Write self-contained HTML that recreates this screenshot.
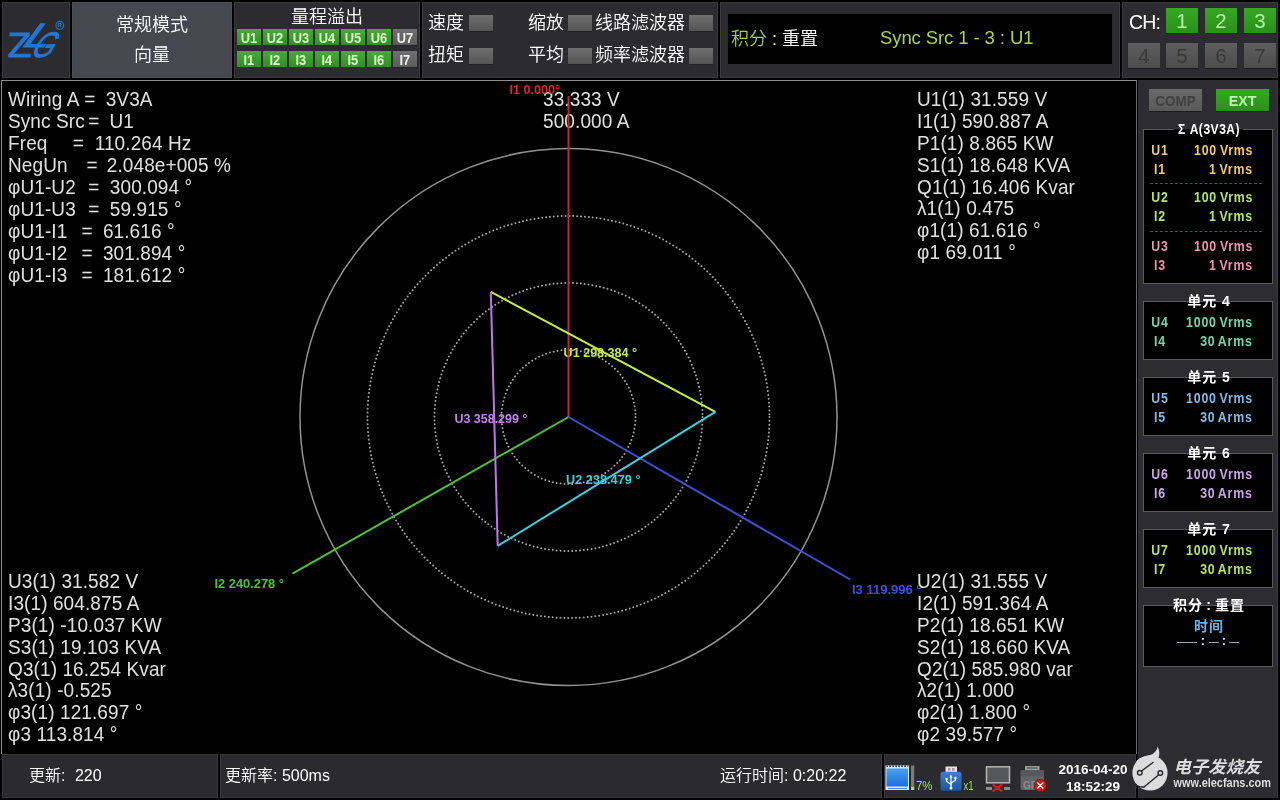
<!DOCTYPE html>
<html lang="zh">
<head>
<meta charset="utf-8">
<title>ZLG Power Analyzer - Vector</title>
<style>
html,body{margin:0;padding:0;background:#000;}
body{width:1280px;height:800px;position:relative;overflow:hidden;font-family:"Liberation Sans","Noto Sans CJK SC",sans-serif;color:#fff;}
#wrap{position:absolute;left:0;top:0;width:1280px;height:800px;will-change:transform;}
.abs{position:absolute;}
.box{position:absolute;background:#2c2c30;box-sizing:border-box;border:1px solid #3b3b40;}
.ui{font-family:"Liberation Sans","Noto Sans CJK SC",sans-serif;font-weight:350;font-size:18px;line-height:20px;color:#fff;white-space:nowrap;position:absolute;}
.ind{position:absolute;width:24px;height:16px;background:linear-gradient(#6e6e6e,#555);box-shadow:0 1px 0 #222;}
.gb{position:absolute;width:24px;height:16px;background:linear-gradient(#4aa93a,#2f9123);color:#dcffc8;font-size:14px;line-height:18.5px;text-align:center;font-weight:bold;box-shadow:0 1px 0 #1a3a14;}
.gb span{display:inline-block;transform:scaleX(.92);}
.gb.off{background:linear-gradient(#707070,#5c5c5c);color:#eee;box-shadow:0 1px 0 #222;}
.ch{position:absolute;width:32px;height:25px;text-align:center;font-size:20.5px;line-height:25px;box-shadow:0 1px 0 #1c1c1c;}
.ch.on{background:linear-gradient(#37a724,#2b9019);color:#b4f5a4;}
.ch.off{background:linear-gradient(#5e5e5e,#4c4c4c);color:#393939;}
#main{position:absolute;left:1px;top:80px;width:1136px;height:674px;box-sizing:border-box;border:1px solid #8e8e8e;border-right-color:#6c6c6e;border-bottom:none;background:#000;}
.col{position:absolute;font-size:19px;line-height:21.05px;letter-spacing:.1px;margin-top:.3px;transform:scaleY(1.045);transform-origin:0 0;color:#e0e0e0;white-space:pre;}
#side{position:absolute;left:1138px;top:80px;width:140px;height:718px;background:#2c2c31;box-sizing:border-box;border-right:1px solid #3a3a40;}
.grp{position:absolute;left:1143px;width:130px;box-sizing:border-box;border:1px solid #5a5a5e;background:#000;}
.gt{position:absolute;left:1138px;width:142px;text-align:center;font-size:14px;line-height:14px;font-weight:bold;color:#fff;white-space:nowrap;letter-spacing:1px;}
.gt span{background:transparent;padding:0 3px;display:inline-block;}
.row{position:absolute;left:1138px;width:142px;height:14px;margin-top:-1px;font-size:14px;line-height:14px;font-weight:bold;white-space:nowrap;}
.row .l{position:absolute;left:2px;width:40px;text-align:center;transform:scaleX(.88);letter-spacing:.9px;word-spacing:-1.5px;}
.row .r{position:absolute;right:28px;text-align:right;transform:scaleX(.88);transform-origin:100% 50%;letter-spacing:.9px;word-spacing:-1.5px;margin-right:-1px;}
.dash{position:absolute;left:1150px;width:112px;height:0;border-top:1px dashed #46536e;}
.bb{position:absolute;top:754px;height:44px;background:#2b2b2f;box-sizing:border-box;border:1px solid #38383c;}
.bt{position:absolute;font-weight:350;font-size:16px;line-height:20px;color:#fff;white-space:nowrap;}
</style>
</head>
<body>
<div id="wrap">

<!-- ===== TOP BAR ===== -->
<div class="box" style="left:2px;top:2px;width:68px;height:76px;"></div>
<div class="box" style="left:72px;top:2px;width:160px;height:76px;background:#46474f;border-color:#4c4d55;"></div>
<div class="box" style="left:234px;top:2px;width:186px;height:76px;"></div>
<div class="box" style="left:422px;top:2px;width:296px;height:76px;"></div>
<div class="box" style="left:720px;top:2px;width:400px;height:76px;"></div>
<div class="box" style="left:1122px;top:2px;width:156px;height:76px;"></div>


<!-- logo -->
<svg class="abs" style="left:0;top:0;" width="72" height="80" viewBox="0 0 72 80">
  <g fill="#2277d4" stroke="#2277d4" stroke-width=".9" font-family="Liberation Sans, sans-serif">
    <text transform="translate(7.6,56.9) scale(1.13,1)" font-size="34.5">Z</text>
    <text transform="translate(19.5,47) skewX(-36.5) scale(1.35,1)" font-size="34">L</text>
    <text transform="translate(28.5,57) skewX(-30) scale(.78,1)" font-size="35.5">G</text>
  </g>
  <circle cx="59.8" cy="25.3" r="3.9" fill="none" stroke="#2277d4" stroke-width="1.1"/>
  <text x="59.8" y="27.4" font-size="5.6" text-anchor="middle" fill="#2a80dc" font-family="Liberation Sans, sans-serif" font-weight="bold">R</text>
</svg>

<!-- mode -->
<div class="ui" style="left:72px;width:160px;top:15px;text-align:center;">常规模式</div>
<div class="ui" style="left:72px;width:160px;top:45px;text-align:center;">向量</div>

<!-- range overflow -->
<div class="ui" style="left:234px;width:186px;top:7px;text-align:center;">量程溢出</div>
<div class="gb" style="left:237px;top:29px;"><span>U1</span></div>
<div class="gb" style="left:263px;top:29px;"><span>U2</span></div>
<div class="gb" style="left:289px;top:29px;"><span>U3</span></div>
<div class="gb" style="left:315px;top:29px;"><span>U4</span></div>
<div class="gb" style="left:341px;top:29px;"><span>U5</span></div>
<div class="gb" style="left:367px;top:29px;"><span>U6</span></div>
<div class="gb off" style="left:393px;top:29px;"><span>U7</span></div>
<div class="gb" style="left:237px;top:51px;"><span>I1</span></div>
<div class="gb" style="left:263px;top:51px;"><span>I2</span></div>
<div class="gb" style="left:289px;top:51px;"><span>I3</span></div>
<div class="gb" style="left:315px;top:51px;"><span>I4</span></div>
<div class="gb" style="left:341px;top:51px;"><span>I5</span></div>
<div class="gb" style="left:367px;top:51px;"><span>I6</span></div>
<div class="gb off" style="left:393px;top:51px;"><span>I7</span></div>

<!-- toggles -->
<div class="ui" style="left:428px;top:13px;">速度</div><div class="ind" style="left:469px;top:15px;"></div>
<div class="ui" style="left:428px;top:45px;">扭矩</div><div class="ind" style="left:469px;top:48px;"></div>
<div class="ui" style="left:528px;top:13px;">缩放</div><div class="ind" style="left:568px;top:15px;"></div>
<div class="ui" style="left:528px;top:45px;">平均</div><div class="ind" style="left:568px;top:48px;"></div>
<div class="ui" style="left:595px;top:13px;">线路滤波器</div><div class="ind" style="left:689px;top:15px;"></div>
<div class="ui" style="left:595px;top:45px;">频率滤波器</div><div class="ind" style="left:689px;top:48px;"></div>

<!-- integ display -->
<div class="abs" style="left:728px;top:14px;width:384px;height:50px;background:#000;"></div>
<div class="ui" style="left:731px;top:29px;"><span style="color:#a2d04a">积分</span> : 重置</div>
<div class="ui" style="left:880px;top:28px;color:#a8d84a;font-size:18.5px;letter-spacing:-.1px;">Sync Src 1 - 3 : U1</div>

<!-- CH -->
<div class="ui" style="left:1129px;top:12px;font-size:19.5px;letter-spacing:-.8px;">CH:</div>
<div class="ch on" style="left:1166px;top:8px;">1</div>
<div class="ch on" style="left:1205px;top:8px;">2</div>
<div class="ch on" style="left:1244px;top:8px;">3</div>
<div class="ch off" style="left:1128px;top:43px;">4</div>
<div class="ch off" style="left:1166px;top:43px;">5</div>
<div class="ch off" style="left:1205px;top:43px;">6</div>
<div class="ch off" style="left:1244px;top:43px;">7</div>

<!-- ===== MAIN ===== -->
<div id="main"></div>


<div class="col" style="left:543px;top:88px;">33.333 V
500.000 A</div>
<svg class="abs" style="left:0;top:0;" width="1280" height="800" viewBox="0 0 1280 800">
  <g font-family="Liberation Sans, sans-serif" font-weight="bold" font-size="13">
    <text x="509.5" y="93.7" fill="#d42a2a" textLength="50.5" lengthAdjust="spacingAndGlyphs">I1 0.000°</text>
    <text x="563.6" y="357" fill="#c6ee44" textLength="73.5" lengthAdjust="spacingAndGlyphs">U1 298.384 °</text>
    <text x="454.4" y="423" fill="#c880f0" textLength="73" lengthAdjust="spacingAndGlyphs">U3 358.299 °</text>
    <text x="566" y="484" fill="#34d2e2" textLength="74.5" lengthAdjust="spacingAndGlyphs">U2 238.479 °</text>
    <text x="214.5" y="588" fill="#4ec234" textLength="69.5" lengthAdjust="spacingAndGlyphs">I2 240.278 °</text>
    <text x="852" y="594" fill="#3a52d6" textLength="69.5" lengthAdjust="spacingAndGlyphs">I3 119.996 °</text>
  </g>
  <g fill="none">
    <circle cx="568.5" cy="417" r="268.5" stroke="#929292" stroke-width="1.5"/>
    <circle cx="568.5" cy="417" r="201" stroke="#a6a6a6" stroke-width="2" stroke-linecap="round" stroke-dasharray="0 3.9"/>
    <circle cx="568.5" cy="417" r="134" stroke="#a6a6a6" stroke-width="2" stroke-linecap="round" stroke-dasharray="0 3.9"/>
    <circle cx="568.5" cy="417" r="67" stroke="#a6a6a6" stroke-width="2" stroke-linecap="round" stroke-dasharray="0 3.9"/>
    <line x1="568.5" y1="417" x2="568.5" y2="96" stroke="#c3282a" stroke-width="2"/>
    <line x1="568.5" y1="417" x2="292.5" y2="573.7" stroke="#4ec234" stroke-width="2"/>
    <line x1="568.5" y1="417" x2="850.2" y2="579.5" stroke="#3a52d6" stroke-width="2"/>
    <line x1="490.8" y1="291.9" x2="715.4" y2="411.9" stroke="#c6ee44" stroke-width="2"/>
    <line x1="715.4" y1="411.9" x2="497.7" y2="545.9" stroke="#34d2e2" stroke-width="2"/>
    <line x1="497.7" y1="545.9" x2="490.8" y2="291.9" stroke="#c273f2" stroke-width="2"/>
  </g>
</svg>

<div id="lc">
<div class="col" style="left:8px;top:88px;">Wiring A</div><div class="col" style="left:84.2px;top:88px;">=</div><div class="col" style="left:105.7px;top:88px;">3V3A</div>
<div class="col" style="left:8px;top:110px;">Sync Src</div><div class="col" style="left:88.3px;top:110px;">=</div><div class="col" style="left:109.5px;top:110px;">U1</div>
<div class="col" style="left:8px;top:132px;">Freq</div><div class="col" style="left:72.7px;top:132px;">=</div><div class="col" style="left:94.7px;top:132px;">110.264 Hz</div>
<div class="col" style="left:8px;top:154px;">NegUn</div><div class="col" style="left:86.4px;top:154px;">=</div><div class="col" style="left:106.8px;top:154px;">2.048e+005 %</div>
<div class="col" style="left:8px;top:176px;">φU1-U2</div><div class="col" style="left:88.3px;top:176px;">=</div><div class="col" style="left:109.8px;top:176px;">300.094 °</div>
<div class="col" style="left:8px;top:198px;">φU1-U3</div><div class="col" style="left:88.3px;top:198px;">=</div><div class="col" style="left:109.8px;top:198px;">59.915 °</div>
<div class="col" style="left:8px;top:220px;">φU1-I1</div><div class="col" style="left:81.5px;top:220px;">=</div><div class="col" style="left:102.9px;top:220px;">61.616 °</div>
<div class="col" style="left:8px;top:242px;">φU1-I2</div><div class="col" style="left:81.5px;top:242px;">=</div><div class="col" style="left:102.9px;top:242px;">301.894 °</div>
<div class="col" style="left:8px;top:264px;">φU1-I3</div><div class="col" style="left:81.5px;top:264px;">=</div><div class="col" style="left:102.9px;top:264px;">181.612 °</div>
</div>


<div class="col" style="left:917px;top:88px;">U1(1) 31.559 V
I1(1) 590.887 A
P1(1) 8.865 KW
S1(1) 18.648 KVA
Q1(1) 16.406 Kvar
λ1(1) 0.475
φ1(1) 61.616 °
φ1 69.011 °</div>

<div class="col" style="left:8px;top:570px;">U3(1) 31.582 V
I3(1) 604.875 A
P3(1) -10.037 KW
S3(1) 19.103 KVA
Q3(1) 16.254 Kvar
λ3(1) -0.525
φ3(1) 121.697 °
φ3 113.814 °</div>

<div class="col" style="left:917px;top:570px;">U2(1) 31.555 V
I2(1) 591.364 A
P2(1) 18.651 KW
S2(1) 18.660 KVA
Q2(1) 585.980 var
λ2(1) 1.000
φ2(1) 1.800 °
φ2 39.577 °</div>

<!-- ===== SIDE ===== -->
<div id="side"></div>


<div class="abs" style="left:1149px;top:89px;width:53px;height:22px;background:linear-gradient(#6a6a6a,#595959);box-shadow:0 1px 0 #1c1c1c;"></div>
<div class="abs" style="left:1149px;top:89px;width:53px;height:22px;line-height:23px;text-align:center;font-size:15px;font-weight:bold;color:#404040;"><span style="display:inline-block;transform:scaleX(.9)">COMP</span></div>
<div class="abs" style="left:1216px;top:89px;width:53px;height:22px;background:linear-gradient(#37a724,#2b9019);box-shadow:0 1px 0 #1c1c1c;"></div>
<div class="abs" style="left:1216px;top:89px;width:53px;height:22px;line-height:23px;text-align:center;font-size:15px;font-weight:bold;color:#b8f8a8;"><span style="display:inline-block;transform:scaleX(.95)">EXT</span></div>

<div class="grp" style="top:129px;height:155px;"></div>
<div class="abs" style="left:1174px;top:129px;width:69px;height:1px;background:#0c0c0e;"></div>
<div class="abs" style="left:1182px;top:300.5px;width:50px;height:1px;background:#0c0c0e;"></div>
<div class="abs" style="left:1182px;top:376.5px;width:50px;height:1px;background:#0c0c0e;"></div>
<div class="abs" style="left:1182px;top:452.5px;width:50px;height:1px;background:#0c0c0e;"></div>
<div class="abs" style="left:1182px;top:528.5px;width:50px;height:1px;background:#0c0c0e;"></div>
<div class="abs" style="left:1167px;top:604.5px;width:83px;height:1px;background:#0c0c0e;"></div>
<div class="gt" style="top:122px;"><span style="transform:scaleX(.86);letter-spacing:.6px;">Σ A(3V3A)</span></div>
<div class="row" style="top:143.5px;color:#f2cc5c;"><span class="l">U1</span><span class="r">100 Vrms</span></div>
<div class="row" style="top:162.5px;color:#f2cc5c;"><span class="l">I1</span><span class="r">1 Vrms</span></div>
<div class="dash" style="top:183px;"></div>
<div class="row" style="top:191px;color:#b4e468;"><span class="l">U2</span><span class="r">100 Vrms</span></div>
<div class="row" style="top:210px;color:#b4e468;"><span class="l">I2</span><span class="r">1 Vrms</span></div>
<div class="dash" style="top:231px;"></div>
<div class="row" style="top:239.5px;color:#f090b4;"><span class="l">U3</span><span class="r">100 Vrms</span></div>
<div class="row" style="top:258.5px;color:#f090b4;"><span class="l">I3</span><span class="r">1 Vrms</span></div>
<div class="grp" style="top:300.5px;height:59px;"></div>
<div class="gt" style="top:293.5px;"><span>单元 4</span></div>
<div class="row" style="top:315.5px;color:#70d8b0;"><span class="l">U4</span><span class="r">1000 Vrms</span></div>
<div class="row" style="top:334.5px;color:#70d8b0;"><span class="l">I4</span><span class="r">30 Arms</span></div>
<div class="grp" style="top:376.5px;height:59px;"></div>
<div class="gt" style="top:369.5px;"><span>单元 5</span></div>
<div class="row" style="top:391.5px;color:#80bce8;"><span class="l">U5</span><span class="r">1000 Vrms</span></div>
<div class="row" style="top:410.5px;color:#80bce8;"><span class="l">I5</span><span class="r">30 Arms</span></div>
<div class="grp" style="top:452.5px;height:59px;"></div>
<div class="gt" style="top:445.5px;"><span>单元 6</span></div>
<div class="row" style="top:467.5px;color:#cca4e8;"><span class="l">U6</span><span class="r">1000 Vrms</span></div>
<div class="row" style="top:486.5px;color:#cca4e8;"><span class="l">I6</span><span class="r">30 Arms</span></div>
<div class="grp" style="top:528.5px;height:59px;"></div>
<div class="gt" style="top:521.5px;"><span>单元 7</span></div>
<div class="row" style="top:543.5px;color:#b4e458;"><span class="l">U7</span><span class="r">1000 Vrms</span></div>
<div class="row" style="top:562.5px;color:#b4e458;"><span class="l">I7</span><span class="r">30 Arms</span></div>

<div class="grp" style="top:604.5px;height:62px;"></div>
<div class="gt" style="top:597.5px;word-spacing:-1.8px;"><span>积分 : 重置</span></div>
<div class="gt" style="top:619px;color:#68b4e8;"><span>时间</span></div>
<div class="abs" style="left:1177px;top:634px;height:14px;line-height:14px;font-size:10px;color:#b4d4ee;white-space:nowrap;"><span>——</span><span style="display:inline-block;width:12px;text-align:center;font-size:13px;font-weight:bold;color:#d8e8f4;">:</span><span>—</span><span style="display:inline-block;width:10px;text-align:center;font-size:13px;font-weight:bold;color:#d8e8f4;">:</span><span>—</span></div>

<!-- ===== BOTTOM ===== -->
<div class="bb" style="left:2px;width:216px;"></div>
<div class="bb" style="left:220px;width:662px;"></div>
<div class="bb" style="left:884px;width:252px;"></div>


<div class="bt" style="left:29px;top:766px;">更新:<span style="margin-left:5px"> 220</span></div>
<div class="bt" style="left:225px;top:766px;">更新率: 500ms</div>
<div class="bt" style="left:720px;top:766px;">运行时间: 0:20:22</div>
<div class="abs" style="left:1050px;top:761px;width:86px;text-align:center;font-size:13.5px;line-height:17px;font-weight:bold;color:#fff;">2016-04-20<br>18:52:29</div>


<!-- status icons -->
<svg class="abs" style="left:880px;top:755px;" width="260" height="45" viewBox="880 755 260 45">
  <defs>
    <linearGradient id="gb" x1="0" y1="0" x2="0" y2="1"><stop offset="0" stop-color="#4aa0f4"/><stop offset="1" stop-color="#1c6fd8"/></linearGradient>
    <linearGradient id="gu" x1="0" y1="0" x2="0" y2="1"><stop offset="0" stop-color="#3d7fd0"/><stop offset="1" stop-color="#1d559c"/></linearGradient>
  </defs>
  <!-- memory -->
  <rect x="885.5" y="765.5" width="23.5" height="24.5" fill="#dfe8f4"/>
  <rect x="886.5" y="768.5" width="21.5" height="18" fill="url(#gb)"/>
  <rect x="886.5" y="765.5" width="21.5" height="1.6" fill="#3a4656"/>
  <g fill="#e8eef8"><rect x="888" y="765.5" width="1.2" height="2.2"/><rect x="891" y="765.5" width="1.2" height="2.2"/><rect x="894" y="765.5" width="1.2" height="2.2"/><rect x="897" y="765.5" width="1.2" height="2.2"/><rect x="900" y="765.5" width="1.2" height="2.2"/><rect x="903" y="765.5" width="1.2" height="2.2"/><rect x="906" y="765.5" width="1.2" height="2.2"/></g>
  <rect x="888" y="788" width="19" height="1" fill="#5a86c0"/>
  <!-- level bar -->
  <rect x="911" y="765.5" width="3.2" height="24.5" fill="#7c7c7c"/>
  <rect x="911" y="787" width="3.2" height="3" fill="#98e468"/>
  <text x="916" y="790" font-family="Liberation Sans, sans-serif" font-size="12.5" fill="#98e468" textLength="16.5" lengthAdjust="spacingAndGlyphs">7%</text>
  <!-- usb -->
  <rect x="945.5" y="766.5" width="11.5" height="6" fill="#e4e4e4"/>
  <rect x="948" y="768" width="2.4" height="2.6" fill="#9a9a9a"/><rect x="952" y="768" width="2.4" height="2.6" fill="#9a9a9a"/>
  <rect x="940.5" y="771.7" width="21" height="19" rx="2.5" fill="url(#gu)"/>
  <g stroke="#eef4ff" stroke-width="1.3" fill="none" stroke-linecap="round">
    <path d="M951 776.5V787.5"/><path d="M951 784.5L946.6 781.2V779.6"/><path d="M951 783L955.4 780.4V778.8"/>
  </g>
  <circle cx="951" cy="788" r="1.5" fill="#eef4ff"/><circle cx="946.6" cy="779" r="1.2" fill="#eef4ff"/><rect x="954.3" y="776.8" width="2.2" height="2.2" fill="#eef4ff"/><path d="M951 774.6L949.3 777.4H952.7Z" fill="#eef4ff"/>
  <text x="963.6" y="790" font-family="Liberation Sans, sans-serif" font-size="12.5" fill="#98e468" textLength="10" lengthAdjust="spacingAndGlyphs">x1</text>
  <!-- monitor -->
  <rect x="986.5" y="766.8" width="23" height="16" fill="#555759" stroke="#b4b4b4" stroke-width="1.5"/>
  <rect x="986" y="787" width="6" height="3" fill="#8a8a8a"/><rect x="1004" y="787" width="6" height="3" fill="#8a8a8a"/>
  <path d="M993.5 785L1001.5 790.8M1001.5 785L993.5 790.8" stroke="#d81c1c" stroke-width="2.2" stroke-linecap="round"/>
  <!-- gpib -->
  <rect x="1025" y="766" width="14.5" height="4.5" fill="#9c9c9c"/>
  <rect x="1027" y="767.3" width="10.5" height="1.4" fill="#5c5c5c"/>
  <rect x="1020.6" y="770.3" width="23.4" height="19.7" rx="1.5" fill="#626466"/>
  <rect x="1020.6" y="770.3" width="23.4" height="6" fill="#56585a"/>
  <text x="1023" y="788.5" font-family="Liberation Sans, sans-serif" font-size="10" font-weight="bold" fill="#8a8c8e">GP</text>
  <circle cx="1040.3" cy="785.5" r="6.2" fill="#c81818"/>
  <circle cx="1040.3" cy="785.5" r="6.2" fill="none" stroke="#7a1010" stroke-width=".8"/>
  <path d="M1037.8 783L1042.8 788M1042.8 783L1037.8 788" stroke="#fff" stroke-width="1.5" stroke-linecap="round"/>
</svg>

<!-- watermark -->
<svg class="abs" style="left:1120px;top:735px;" width="160" height="65" viewBox="1120 735 160 65">
  <g fill="#dcdcdc">
    <circle cx="1150" cy="773" r="17.6"/>
    <path d="M1136 762C1140 755 1150 757 1154 753C1157 750 1157.5 748 1157.3 746.5C1160 750 1160.5 757 1156 762Z"/>
  </g>
  <g stroke="#2c2c30" stroke-width="1.5" fill="none" stroke-linecap="round">
    <path d="M1141.5 771L1153 762.5"/><path d="M1144 787L1158.5 775"/>
    <path d="M1133.5 783C1137 786 1141 787.5 1144 787"/>
    <circle cx="1139.8" cy="772.8" r="2.3" fill="#dcdcdc"/><circle cx="1160.3" cy="773" r="2.3" fill="#dcdcdc"/>
  </g>
  <text x="1173.5" y="772.5" font-family="Liberation Sans, Noto Sans CJK SC, sans-serif" font-size="17" font-weight="bold" font-style="italic" fill="#dcdcdc" textLength="87" lengthAdjust="spacingAndGlyphs">电子发烧友</text>
  <text x="1173.5" y="787" font-family="Liberation Sans, sans-serif" font-size="12.5" font-weight="bold" fill="#dcdcdc" textLength="97.5" lengthAdjust="spacingAndGlyphs">www.elecfans.com</text>
</svg>

</div>
</body>
</html>
